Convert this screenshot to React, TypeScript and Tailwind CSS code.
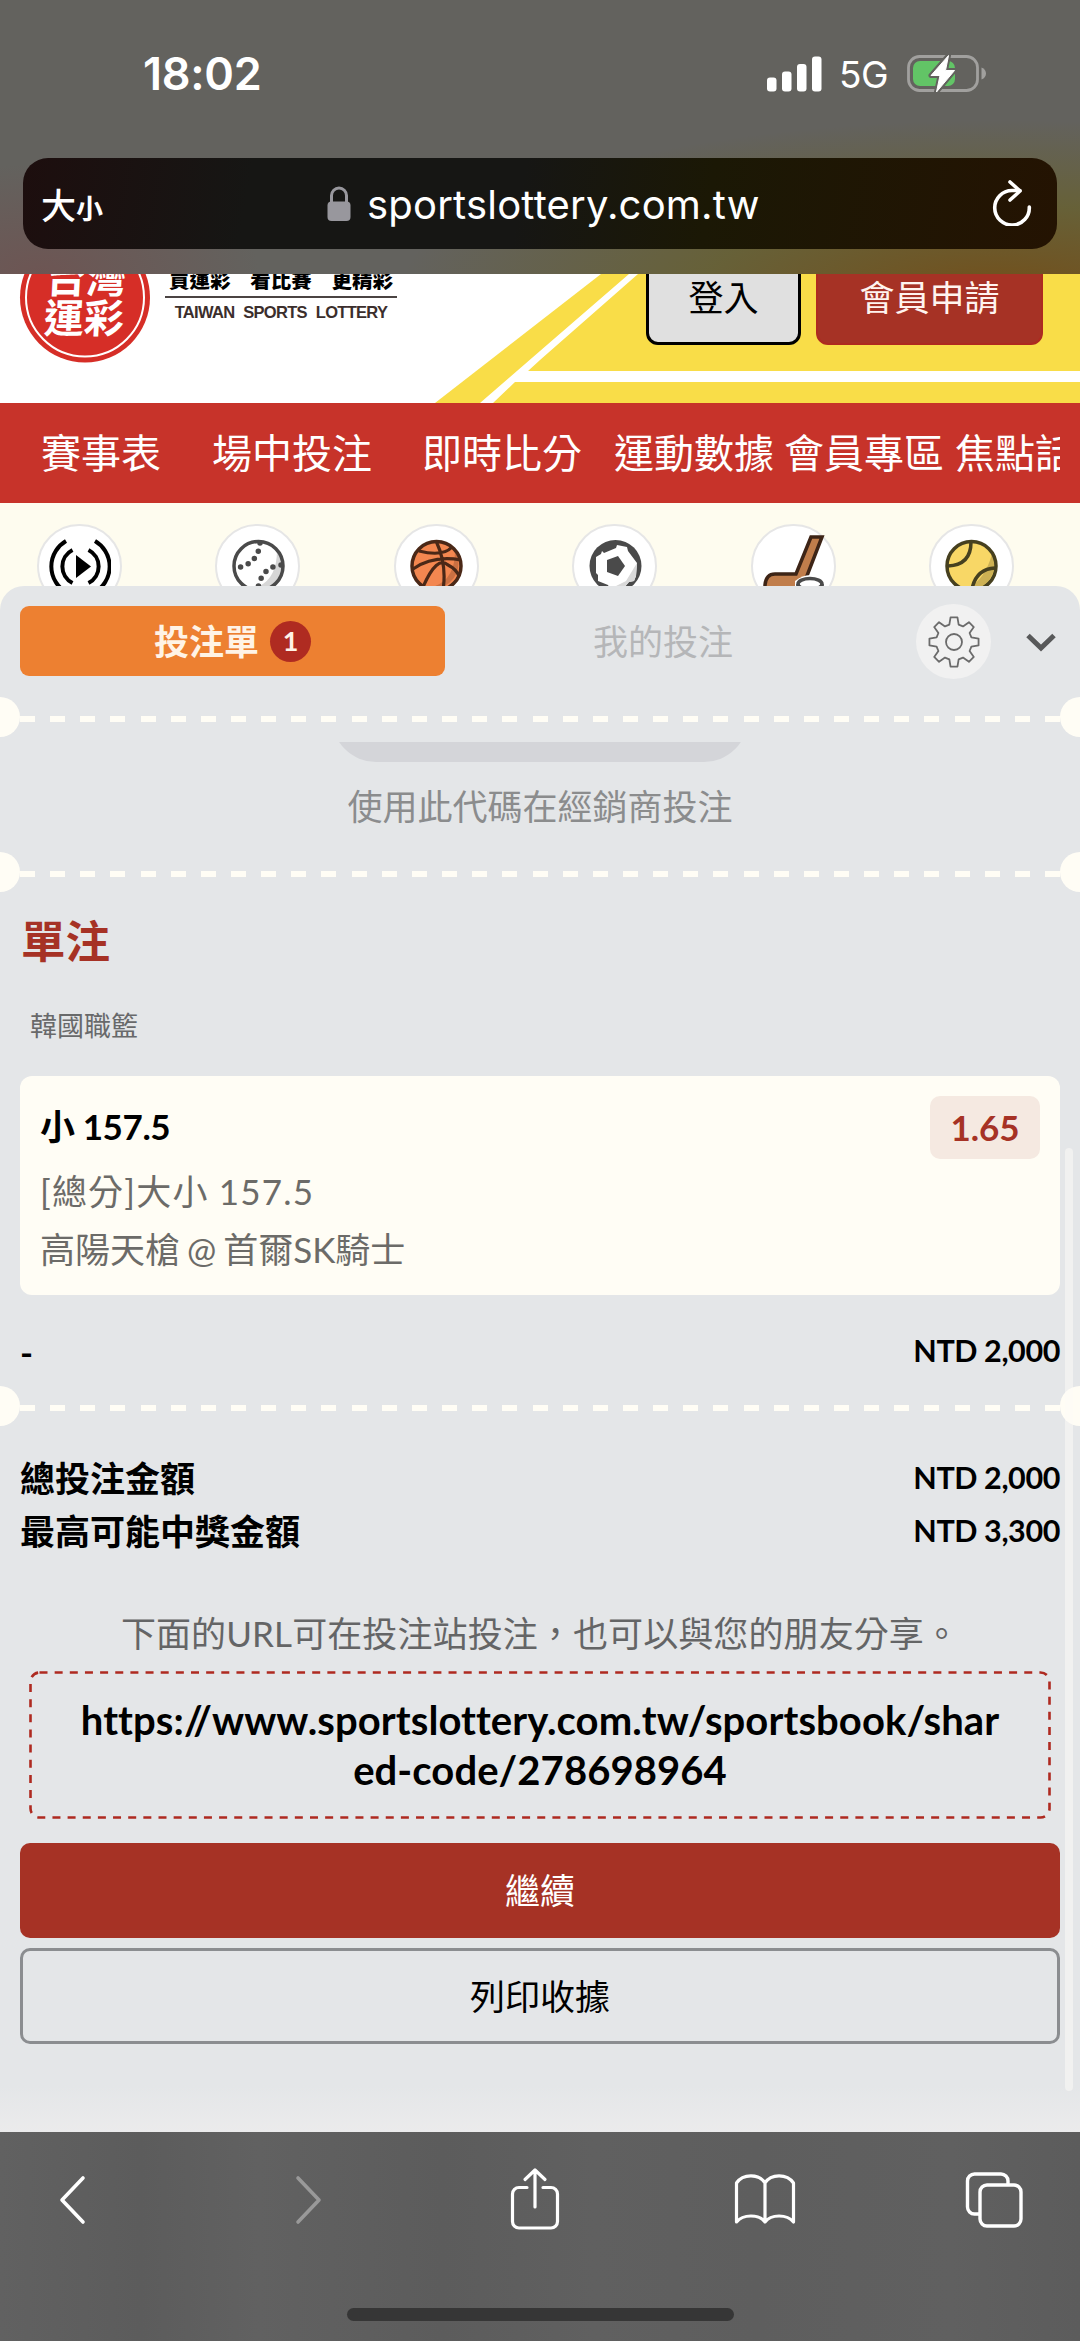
import type { ReactNode } from 'react';

const navItems = [
  { label: '賽事表', className: 'ml-[41px]' },
  { label: '場中投注', className: 'ml-[51px]' },
  { label: '即時比分', className: 'ml-[50px]' },
  { label: '運動數據', className: 'ml-[32px]' },
  { label: '會員專區', className: 'ml-[10px]' },
  { label: '焦點話題', className: 'ml-[11px]' },
];

// Eight-tooth outline around (26, 26)
const gearPoints = Array.from({ length: 8 }, (_, i) =>
  [
    [18, -15],
    [24.8, -8],
    [24.8, 8],
    [18, 15],
  ].map(([r, offset]) => {
    const angle = ((i * 45 + offset) * Math.PI) / 180;
    return `${(26 + r * Math.sin(angle)).toFixed(2)},${(26 - r * Math.cos(angle)).toFixed(2)}`;
  }),
)
  .flat()
  .join(' ');

function StatusBar() {
  return (
    <div className="flex h-[158px] items-start justify-between pl-[143px] pr-[94px]">
      <span className="mt-[47px] font-['Inter'] text-[45px] font-semibold leading-[54px] tracking-[-0.3px]">18:02</span>
      <div className="mt-[53px] flex items-center">
        <svg width="56" height="38" viewBox="0 0 56 38" fill="#fff">
          <rect x="1" y="22.5" width="9.5" height="14" rx="3" />
          <rect x="16" y="16.5" width="9.5" height="20" rx="3" />
          <rect x="31" y="9" width="9.5" height="27.5" rx="3" />
          <rect x="46" y="1.5" width="9.5" height="35" rx="3" />
        </svg>
        <span className="ml-[17px] mt-[3px] w-[67px] font-['Inter'] text-[37px] leading-[38px] tracking-[-0.5px]">5G</span>
        <svg width="80" height="40" viewBox="0 0 80 40" fill="none">
          <rect x="2.5" y="2.5" width="69" height="34" rx="11" stroke="#a1a09e" strokeWidth="2.8" />
          <path d="M75.500 13.500v12c6-2 6-10 0-12z" fill="#a1a09e" />
          <rect x="7" y="7" width="42" height="25" rx="7" fill="#62c466" />
          <path d="M42.500 1.500L25 21.500h9l-3.500 16.500L48.500 16.500h-9z" fill="#fff" stroke="#63625e" strokeWidth="5" strokeLinejoin="round" />
          <path d="M42.500 1.500L25 21.500h9l-3.500 16.500L48.500 16.500h-9z" fill="#fff" stroke="#fff" strokeWidth="1" strokeLinejoin="round" />
        </svg>
      </div>
    </div>
  );
}

function AddressBar() {
  return (
    <div className="mx-[23px] flex h-[91px] items-center rounded-[25px] bg-[linear-gradient(100deg,#1d0e0e_0%,#161614_22%,#161614_48%,#1b1805_66%,#241302_100%)]">
      <span className="ml-[18px] flex w-[285px] items-end font-['Noto_Sans_CJK_TC'] font-medium leading-[44px]">
        <span className="text-[35px]">大</span>
        <span className="text-[27px] font-bold leading-[36px]">小</span>
      </span>
      <svg width="24" height="36" viewBox="0 0 24 36" className="ml-px" fill="none">
        <path d="M4.500 17V9.500a7.500 7.500 0 0 1 15 0V17" stroke="#98979d" strokeWidth="3" />
        <rect x="0.5" y="15.5" width="23" height="19.5" rx="4" fill="#98979d" />
      </svg>
      <span className="ml-[16px] mt-[2px] w-[624px] font-['Inter'] text-[40px] leading-[50px] tracking-[0.2px]">sportslottery.com.tw</span>
      <svg width="42" height="48" viewBox="0 0 42 48" className="-mt-[4px]" fill="none" stroke="#fff" strokeWidth="3.6" strokeLinecap="round" strokeLinejoin="round">
        <path d="M29 12.500H21A17.300 17.300 0 1 0 38.300 29" />
        <path d="M19 4l10 9-10 9" />
      </svg>
    </div>
  );
}

function SiteHeader() {
  return (
    <header className="relative h-[129px] overflow-hidden bg-white text-black">
      <svg className="absolute inset-0" width="1080" height="129" viewBox="0 0 1080 129">
        <path d="M435 129L601 0H1080V129z" fill="#f9dd48" />
        <path d="M480 129L540 77 629 0H638L540 86 528 97H1080V108H515L493 129z" fill="#fff" />
        <circle cx="85" cy="23.5" r="65" fill="#d62e27" />
        <circle cx="85" cy="23.5" r="59" fill="none" stroke="#fff" strokeWidth="2" />
      </svg>
      <div className="relative flex">
        <div className="ml-[45px] -mt-[18px] w-[80px] -skew-x-3 font-['Noto_Sans_CJK_TC'] text-[40px] font-bold leading-[40px] text-white">
          台灣
          <br />
          運彩
        </div>
        <div className="ml-[40px] -mt-[14px] w-[232px] text-center">
          <div className="flex h-[38px] justify-between border-b-2 border-[#4b4443] px-[4px] font-['Noto_Sans_CJK_TC'] text-[20.5px] font-black leading-[38px]">
            <span>買運彩</span>
            <span>看比賽</span>
            <span>更精彩</span>
          </div>
          <p className="mt-[4px] whitespace-nowrap font-['Liberation_Sans'] text-[16.5px] font-bold leading-[20px] tracking-[-0.7px] text-[#3b2e2c] [word-spacing:5px]">
            TAIWAN SPORTS LOTTERY
          </p>
        </div>
        <button className="ml-[249px] -mt-[26px] h-[97px] w-[155px] rounded-[12px] border-3 border-black bg-[#e0e0e0] pt-[1px] text-[35px]">
          登入
        </button>
        <button className="ml-[15px] -mt-[26px] h-[97px] w-[227px] rounded-[12px] border-2 border-[#ae2a20] bg-[#a63225] pt-[1px] text-[35px] text-[#fff4ef]">
          會員申請
        </button>
      </div>
    </header>
  );
}

function SportBubble({ children }: { children: ReactNode }) {
  return (
    <div className="flex h-[84px] w-[85px] shrink-0 items-center justify-center rounded-full border-2 border-[#e6e6e6] bg-white">
      {children}
    </div>
  );
}

function SportsStrip() {
  return (
    <div className="flex h-[83px] justify-between overflow-hidden pl-[37px] pr-[66px] pt-[21px]">
      <SportBubble>
        <svg width="62" height="62" viewBox="0 0 62 62" fill="none" stroke="#000" strokeWidth="4" className="shrink-0">
          <path d="M27 20v23l15-11.500z" fill="#000" stroke="none" />
          <path d="M23.500 15a18.500 18.500 0 0 0 0 33M39.500 15a18.500 18.500 0 0 1 0 33M17 6a29.500 29.500 0 0 0 0 51M46 6a29.500 29.500 0 0 1 0 51" />
        </svg>
      </SportBubble>
      <SportBubble>
        <svg width="54" height="54" viewBox="0 0 54 54" fill="none">
          <circle cx="27.5" cy="27" r="24.5" fill="#fff" />
          <path d="M46 11A25 25 0 0 1 19 50Q46 45 46 11z" fill="#d6d6d6" />
          <circle cx="27.5" cy="27" r="24.5" stroke="#4a4a4a" strokeWidth="3.5" />
          <path d="M29 4Q27 26 4 29M50 26Q31 28 27 49" stroke="#4a4a4a" strokeWidth="5.5" strokeLinecap="round" strokeDasharray="0 8.300" />
        </svg>
      </SportBubble>
      <SportBubble>
        <svg width="54" height="54" viewBox="0 0 54 54" fill="none">
          <circle cx="27.5" cy="27" r="24.5" fill="#f38750" />
          <path d="M46 12A25 25 0 0 1 19 49Q46 44 46 12z" fill="#cb7042" />
          <path d="M27.500 3Q38 26 34 51M10 12Q34 18 43 8M4 30Q24 16 52 21M14 48Q28 16 39 26Q47 30 50 37" stroke="#4a2817" strokeWidth="3.2" />
          <circle cx="27.5" cy="27" r="24.5" stroke="#4a2817" strokeWidth="3.5" />
        </svg>
      </SportBubble>
      <SportBubble>
        <svg width="54" height="54" viewBox="0 0 54 54" fill="none">
          <circle cx="27.5" cy="27" r="26" fill="#4a4a4a" />
          <path d="M14 12L16 14 28 9 29 6 39 8 40 12 49 24 48 37 46 42 41 43 34 51 22 50 20 46 10 42V36L8 34V18L13 15z" fill="#fff" />
          <path d="M49 24L48 37 46 42 41 43 34 51 22 50 38 42z" fill="#d9d9d9" />
          <path d="M19 21L30 17 37 27 30 37 19 33z" fill="#4a4a4a" />
        </svg>
      </SportBubble>
      <SportBubble>
        <svg width="66" height="66" viewBox="0 0 66 66" fill="none" className="shrink-0">
          <path d="M51 4H62L45 48 28 60H5V52Q6 41 15 41H36z" fill="#c07d4b" stroke="#3d2416" strokeWidth="3.5" />
          <path d="M35 48V66H66V48Q50 36 35 48z" fill="#fff" />
          <ellipse cx="50" cy="51" rx="12" ry="5.5" fill="#fff" stroke="#4a4a4a" strokeWidth="3.5" />
          <path d="M38 51v10h24V51" stroke="#4a4a4a" strokeWidth="3.5" />
        </svg>
      </SportBubble>
      <SportBubble>
        <svg width="54" height="54" viewBox="0 0 54 54" fill="none">
          <circle cx="27.5" cy="27" r="24.5" fill="#f8d766" />
          <path d="M48 15A25 25 0 0 1 20 50Q40 44 48 15z" fill="#cdb154" />
          <path d="M27 3Q27 26 4 27M51 29Q32 30 28 50" stroke="#46401f" strokeWidth="3.5" />
          <circle cx="27.5" cy="27" r="24.5" stroke="#46401f" strokeWidth="3.5" />
        </svg>
      </SportBubble>
    </div>
  );
}

// Perforated ticket edge with a half circle punched out on both sides
function TearLine() {
  return (
    <div className="flex h-[40px] items-center justify-between overflow-hidden">
      <span className="-ml-[20px] size-[40px] shrink-0 rounded-full bg-[#fffdf5]" />
      <span className="mt-[3px] h-[6px] w-[1040px] shrink-0 bg-[repeating-linear-gradient(90deg,#fffdf5_0_15px,transparent_15px_30.150px)]" />
      <span className="-mr-[20px] size-[40px] shrink-0 rounded-full bg-[#fffdf5]" />
    </div>
  );
}

function SheetTabs() {
  return (
    <div className="flex h-[111px] items-start pl-[20px] pt-[20px]">
      <button className="flex h-[70px] w-[425px] items-center justify-center rounded-[9px] bg-[#ed8031] text-[35px] font-bold text-[#fff3e6]">
        投注單
        <span className="ml-[11px] flex size-[41px] items-center justify-center rounded-full bg-[#af2b21] text-[27px]">1</span>
      </button>
      <button className="h-[70px] w-[436px] text-[35px] text-[#b5b6b8]">我的投注</button>
      <button className="-mt-[2px] ml-[35px] flex size-[75px] items-center justify-center rounded-full bg-[#f1f1f1]">
        <svg width="52" height="52" viewBox="0 0 52 52" fill="none" stroke="#6b6b6b" strokeWidth="1.8" strokeLinejoin="round">
          <circle cx="26" cy="26" r="8" />
          <polygon points={gearPoints} />
        </svg>
      </button>
      <svg className="ml-[34px] mt-[25px]" width="32" height="22" viewBox="0 0 32 22" fill="none" stroke="#58595a" strokeWidth="5">
        <path d="M3 4.500l13 12.500L29 4.500" />
      </svg>
    </div>
  );
}

function AmountRow({ label, value, className }: { label: string; value: string; className: string }) {
  return (
    <div className={className}>
      <span className="text-[35px]">{label}</span>
      <span className="-mt-[2px] text-[30.5px] tracking-[-0.4px]">{value}</span>
    </div>
  );
}

function BetSlip() {
  return (
    <main className="relative h-[1546px] overflow-hidden rounded-t-[24px] bg-[linear-gradient(#e4e6e8_97%,#ebebec)] text-black">
      <SheetTabs />
      <TearLine />
      <div className="mx-auto mt-[5px] h-[20px] w-[416px] overflow-hidden">
        <div className="-mt-[68px] h-[88px] rounded-full bg-[#d4d5d9]" />
      </div>
      <p className="mt-[19px] text-center text-[35px] leading-[50px] text-[#8b8c8d]">使用此代碼在經銷商投注</p>
      <div className="h-[21px]" />
      <TearLine />

      <h2 className="mt-[19px] pl-[21px] text-[44.5px] font-bold leading-[60px] text-[#a63225]">單注</h2>
      <p className="mt-[35px] pl-[30px] text-[27px] leading-[40px] text-[#68696a]">韓國職籃</p>

      <section className="mx-[20px] mt-[30px] h-[219px] rounded-[12px] bg-[#fffdf5] pl-[20px] pr-[20px] pt-[20px]">
        <div className="flex h-[63px] items-center justify-between">
          <span className="-mt-[2px] text-[35px] font-bold tracking-[-0.4px]">小 157.5</span>
          <span className="flex h-[63px] w-[110px] items-center justify-center rounded-[10px] bg-[#f5e9e1] text-[35px] font-bold text-[#a63225]">1.65</span>
        </div>
        <p className="mt-[3px] text-[35px] leading-[58px] tracking-[1.2px] text-[#6c6b68]">[總分]大小 157.5</p>
        <p className="text-[35px] leading-[58px] text-[#6c6b68] [word-spacing:-2px]">高陽天槍 @ 首爾SK騎士</p>
      </section>

      <AmountRow className="mx-[20px] mt-[31px] flex h-[52px] items-center justify-between font-bold" label="-" value="NTD 2,000" />
      <div className="h-[8px]" />
      <TearLine />
      <AmountRow className="mx-[20px] mt-[26px] flex h-[53px] items-center justify-between font-bold" label="總投注金額" value="NTD 2,000" />
      <AmountRow className="mx-[20px] flex h-[53px] items-center justify-between font-bold" label="最高可能中獎金額" value="NTD 3,300" />

      <p className="mt-[50px] text-center text-[35px] leading-[50px] tracking-[0.1px] text-[#646566]">下面的URL可在投注站投注，也可以與您的朋友分享。</p>
      <div className="relative mx-[29px] mt-[13px] h-[148px] pt-[24px] text-center text-[40px] font-bold leading-[50px] tracking-[0.08px] [font-variant-ligatures:none]">
        <svg className="absolute inset-0" width="1022" height="148" viewBox="0 0 1022 148" fill="none">
          <rect x="1.5" y="1.5" width="1019" height="145" rx="9" stroke="#ae2a20" strokeWidth="2.6" strokeDasharray="8 7.150" />
        </svg>
        https://www.sportslottery.com.tw/sportsbook/shar
        <br />
        ed-code/278698964
      </div>
      <button className="mx-[20px] mt-[24px] block h-[95px] w-[1040px] rounded-[10px] bg-[#a63225] text-[35px] text-white">繼續</button>
      <button className="mx-[20px] mt-[10px] block h-[96px] w-[1040px] rounded-[10px] border-3 border-[#8b8d90] text-[35px]">列印收據</button>

      {/* Scroll thumb */}
      <div className="absolute left-[1065px] top-[562px] h-[943px] w-[8px] rounded-full bg-[#fdfbf8]/50" />
    </main>
  );
}

function BottomToolbar() {
  return (
    <footer className="h-[209px] bg-[linear-gradient(90deg,#616161,#5c5c5c_13%,#616161_24%,#5c5c5c_41%,#606060_55%,#5e5e5e_70%,#606060_88%,#5c5c5c)]">
      <div className="flex h-[176px] items-start pt-[32px]">
        <svg className="ml-[55px] mt-[9px]" width="34" height="54" viewBox="0 0 34 54" fill="none" stroke="#fff" strokeWidth="3.6" strokeLinecap="round" strokeLinejoin="round">
          <path d="M28 5L7 27l21 22" />
        </svg>
        <svg className="ml-[202px] mt-[9px]" width="34" height="54" viewBox="0 0 34 54" fill="none" stroke="#999" strokeWidth="3.6" strokeLinecap="round" strokeLinejoin="round">
          <path d="M7 5l21 22L7 49" />
        </svg>
        <svg className="ml-[182px]" width="56" height="68" viewBox="0 0 56 68" fill="none" stroke="#fff" strokeWidth="3.2" strokeLinecap="round" strokeLinejoin="round">
          <path d="M20 23.500H12a6.500 6.500 0 0 0-6.500 6.500v27.500a6.500 6.500 0 0 0 6.500 6.500h32a6.500 6.500 0 0 0 6.500-6.500V30a6.500 6.500 0 0 0-6.500-6.500h-8M28 43V6M18 15.500L28 6l10 9.500" />
        </svg>
        <svg className="ml-[168px] mt-[9px]" width="68" height="56" viewBox="0 0 68 56" fill="none" stroke="#fff" strokeWidth="3.2" strokeLinecap="round" strokeLinejoin="round">
          <path d="M34 10C28 .5 12 .5 5.500 10v39C12 41 28 41 34 49 40 41 56 41 62.500 49V10C56 .5 40 .5 34 10zM34 10v39" />
        </svg>
        <svg className="ml-[164px] mt-[6px]" width="62" height="62" viewBox="0 0 62 62" fill="none" stroke="#fff" strokeWidth="3.4">
          <rect x="17" y="15" width="41" height="41" rx="7" />
          <path d="M17 44h-5.500a7 7 0 0 1-7-7V11a7 7 0 0 1 7-7H38a7 7 0 0 1 7 7v4" />
        </svg>
      </div>
      <div className="mx-auto h-[13px] w-[387px] rounded-full bg-[#363636]" />
    </footer>
  );
}

export default function App() {
  return (
    <div className="h-[2341px] w-[1080px] overflow-hidden bg-[#fefcef] font-[Lato,'Noto_Sans_CJK_TC',sans-serif] text-white">
      <div className="h-[274px] bg-[radial-gradient(600px_170px_at_1000px_290px,#705321_10%,#69601f99_50%,#63625e00),radial-gradient(220px_110px_at_40px_274px,#6d5553,#63625e00)] bg-[#63625e]">
        <StatusBar />
        <AddressBar />
      </div>
      <SiteHeader />
      <nav className="h-[100px] bg-[#c7332a] pr-[20px]">
        <div className="flex h-[100px] items-center overflow-hidden whitespace-nowrap">
          {navItems.map((item) => (
            <a key={item.label} className={`shrink-0 text-[40px] ${item.className}`}>
              {item.label}
            </a>
          ))}
        </div>
      </nav>
      <SportsStrip />
      <BetSlip />
      <BottomToolbar />
    </div>
  );
}
